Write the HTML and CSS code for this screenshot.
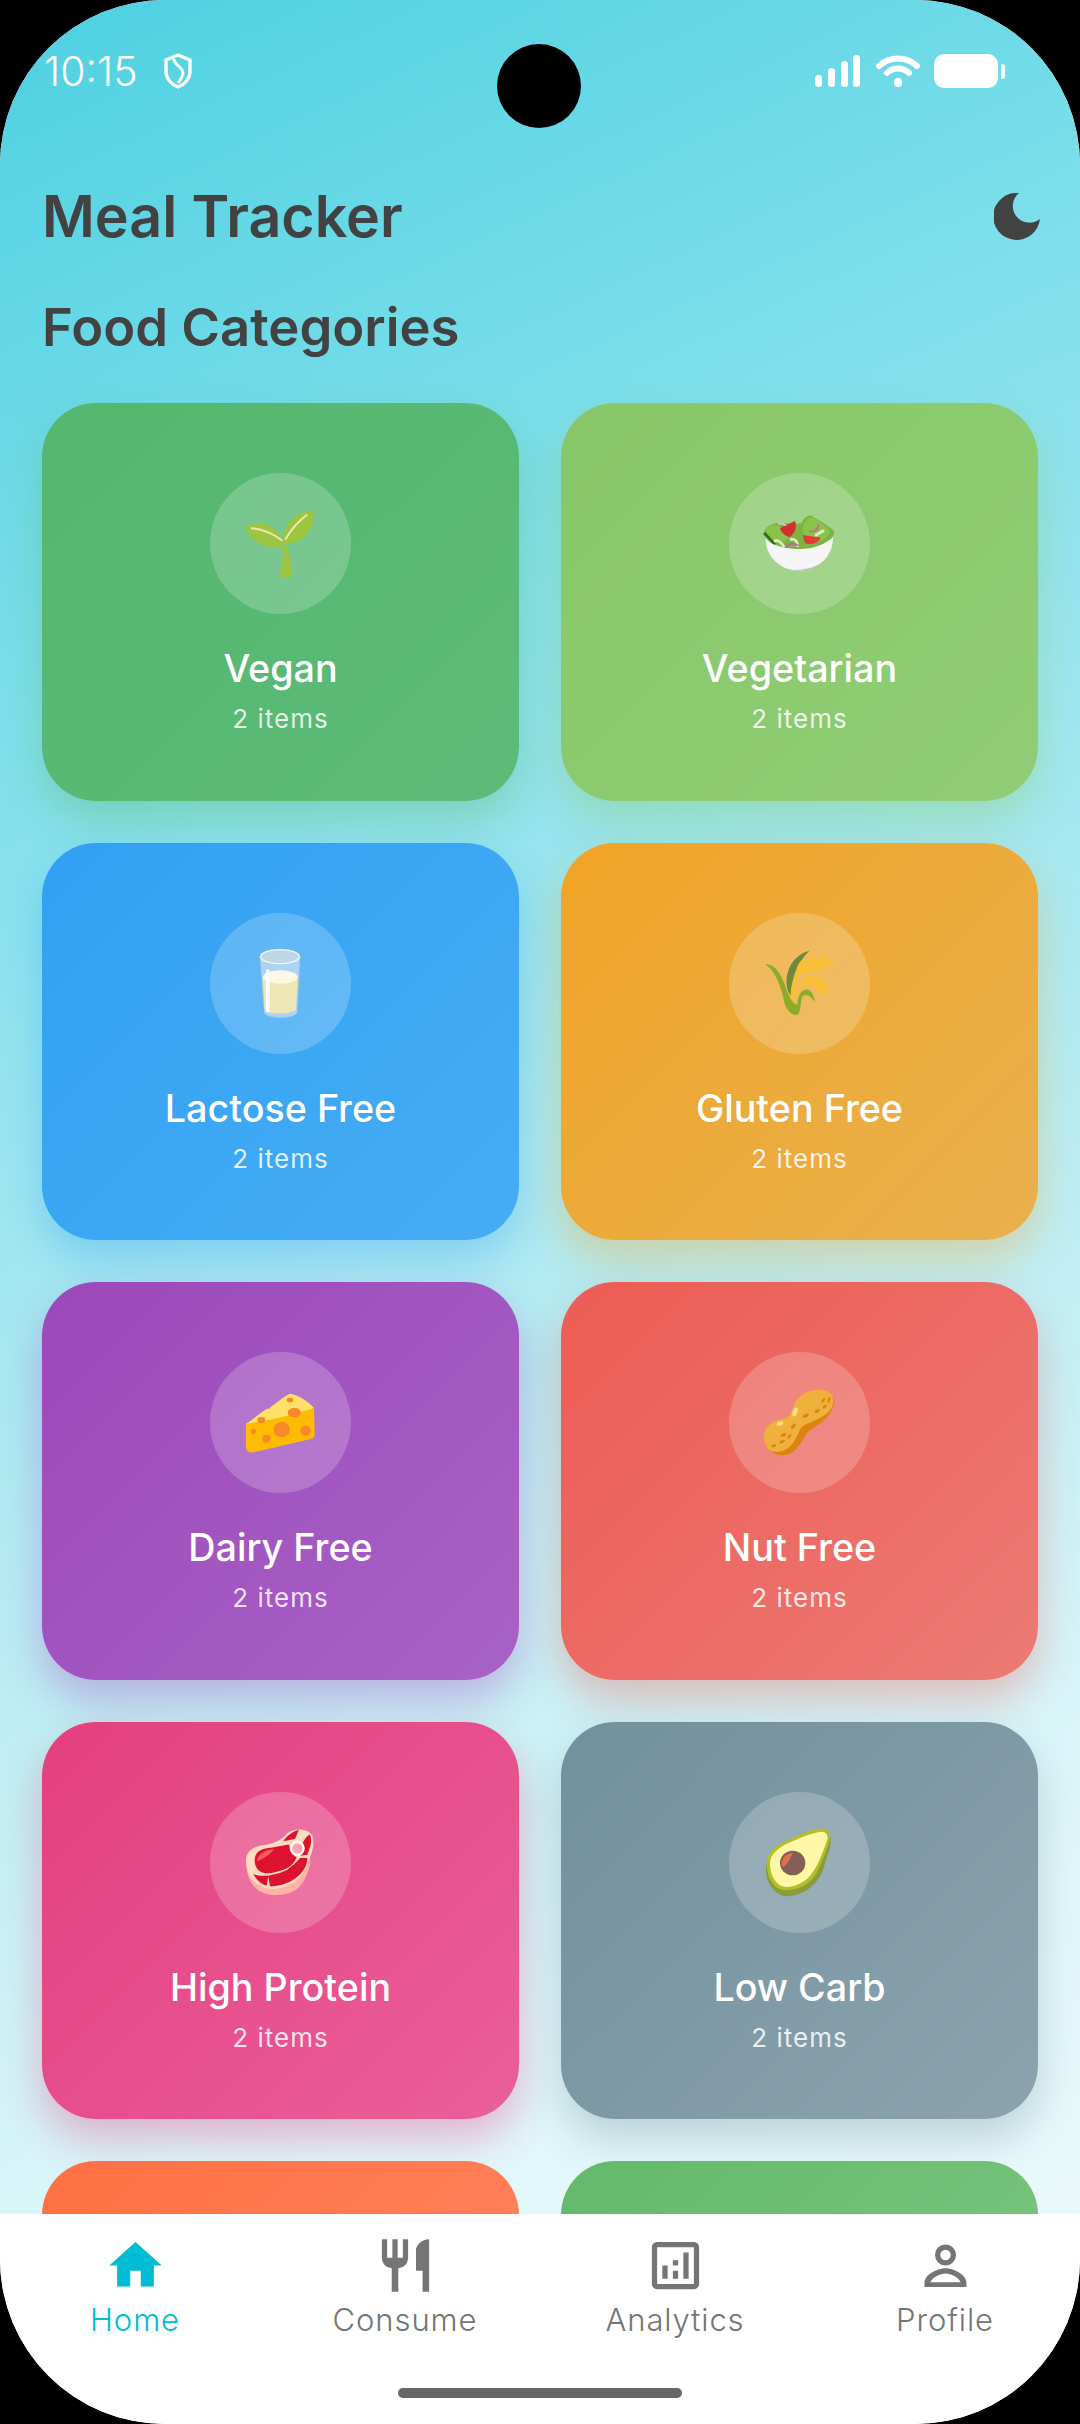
FILE: index.html
```html
<!DOCTYPE html>
<html lang="en">
<head>
<meta charset="utf-8">
<title>Meal Tracker</title>
<link rel="stylesheet" href="styles.css">
</head>
<body>
<div class="screen">
  <div class="camera"></div>
  <main class="content">
    <div class="status">
      <div class="status-left">
        <span class="time">10:15</span>
        <svg class="shield" viewBox="0 0 30 36"><path d="M15 2 L27 7 V18 C27 26 21 32 15 34 C9 32 3 26 3 18 V7 Z" fill="none" stroke="#fff" stroke-width="3.4" stroke-linejoin="round"/><path d="M11 6 C11 12 20 14 20 20 C20 24 17 27 15 30" fill="none" stroke="#fff" stroke-width="3"/></svg>
      </div>
      <div class="status-right">
        <svg class="signal" viewBox="0 0 45 32"><rect x="0" y="20" width="7" height="12" rx="3.5"/><rect x="13" y="13" width="7" height="19" rx="3.5"/><rect x="26" y="6" width="7" height="26" rx="3.5"/><rect x="38" y="0" width="7" height="32" rx="3.5"/></svg>
        <svg class="wifi" viewBox="0 0 44 32"><path d="M3 11 C14 1 30 1 41 11" fill="none" stroke="#fff" stroke-width="6" stroke-linecap="round"/><path d="M11 18 C17 12 27 12 33 18" fill="none" stroke="#fff" stroke-width="6" stroke-linecap="round"/><rect x="18" y="23" width="8" height="9" rx="4" fill="#fff"/></svg>
        <div class="battery"></div>
        <div class="battery-nub"></div>
      </div>
    </div>
    <header class="title-row">
      <h1>Meal Tracker</h1>
      <svg class="moon" viewBox="0 0 46 47"><path d="M25 0 A23.5 23.5 0 1 0 46 26 A16 16 0 1 1 25 0 Z" fill="#424242"/></svg>
    </header>
    <h2>Food Categories</h2>
    <div class="grid">

      <article class="card vegan">
        <div class="circle"><svg viewBox="30 40 423 423"><path d="M250 355 C238 352 236 350 240 340 C248 315 250 285 247 258 L262 255 C268 285 276 320 274 345 C272 353 262 356 250 355 Z" fill="#9cc63f"/><path d="M136 205 C170 175 235 195 250 250 C252 260 240 262 225 263 C185 264 155 240 136 205 Z" fill="#9cc63f"/><path d="M342 153 C345 200 320 245 265 252 C252 254 246 248 248 235 C256 185 290 155 342 153 Z" fill="#9cc63f"/><path d="M156 206 C185 208 222 222 245 242" fill="none" stroke="#f5e6b0" stroke-width="6" stroke-linecap="round"/><path d="M257 238 C272 212 295 185 320 166" fill="none" stroke="#f5e6b0" stroke-width="6" stroke-linecap="round"/></svg></div>
        <h3>Vegan</h3><p>2 items</p>
      </article>

      <article class="card vegetarian">
        <div class="circle"><svg viewBox="27 40 423 423"><path d="M132 218 C140 200 150 192 175 190 L230 192 L245 190 C250 178 262 165 275 168 C290 180 325 195 343 215 C340 250 300 270 240 270 C190 270 150 255 132 218 Z" fill="#7cb342"/><path d="M136 212 C150 190 180 195 205 215 C215 245 180 255 160 240 Z" fill="#8bc34a"/><path d="M258 185 C270 160 290 180 322 205 C345 222 305 255 270 245 C245 230 240 200 258 185 Z" fill="#8bc34a"/><path d="M180 205 L225 184 C232 205 222 225 208 232 C195 228 182 218 180 205 Z" fill="#d32f2f"/><path d="M248 226 L302 234 C295 250 270 258 255 250 Z" fill="#e53935"/><path d="M132 220 L165 255" stroke="#33691e" stroke-width="8"/><path d="M162 245 C172 238 188 250 192 262" fill="none" stroke="#dcedc8" stroke-width="8"/><path d="M210 240 C222 235 235 245 232 262" fill="none" stroke="#dcedc8" stroke-width="8"/><path d="M285 228 L312 212" stroke="#dcedc8" stroke-width="9"/><path d="M198 264 C208 250 222 248 235 258" fill="none" stroke="#c2669b" stroke-width="5"/><path d="M268 213 C280 220 295 210 296 195" fill="none" stroke="#c2669b" stroke-width="5"/><path d="M174 194 C182 190 190 192 198 198" fill="none" stroke="#e8bcd6" stroke-width="5"/><path d="M137 238 C160 262 205 268 240 268 C280 268 315 255 339 232 C340 290 295 333 238 333 C180 333 137 290 137 238 Z" fill="#f5f5f5"/><path d="M152 284 C160 300 170 310 190 318 C175 315 160 305 152 284 Z" fill="#cfd8dc"/><path d="M165 322 C200 336 280 336 315 300 C295 325 265 333 238 333 C210 333 185 330 165 322 Z" fill="#bdbdbd"/></svg></div>
        <h3>Vegetarian</h3><p>2 items</p>
      </article>

      <article class="card lactose">
        <div class="circle"><svg viewBox="30 40 423 423"><path d="M180 170 C185 145 295 145 300 170 L291 340 C280 358 205 358 193 340 Z" fill="#c5dcef" fill-opacity=".75" stroke="#c9c4b4" stroke-opacity=".6" stroke-width="2"/><ellipse cx="240" cy="171" rx="58" ry="21" fill="#bfd5e8" stroke="#f5f5f0" stroke-width="4"/><path d="M188 232 C205 208 275 208 293 232 L288 330 C270 345 210 345 194 330 Z" fill="#eee6b4"/><ellipse cx="241" cy="232" rx="52" ry="20" fill="#fcf9e2"/><rect x="198" y="208" width="11" height="130" rx="5" fill="#fff" fill-opacity=".9"/></svg></div>
        <h3>Lactose Free</h3><p>2 items</p>
      </article>

      <article class="card gluten">
        <div class="circle"><svg viewBox="27 40 423 423"><path d="M268 153 C230 162 205 195 200 235 C198 260 203 280 215 290 C212 250 225 195 268 153 Z" fill="#6d8b3a"/><path d="M235 200 C222 230 210 260 212 300 L222 310 C222 275 228 240 240 215 Z" fill="#fbc02d"/><path d="M225 285 C235 260 250 250 262 245 L265 252 C250 258 238 270 230 292 Z" fill="#fbc02d"/><g fill="#fbc02d"><ellipse cx="245" cy="195" rx="9" ry="20" transform="rotate(35 245 195)"/><ellipse cx="272" cy="188" rx="8" ry="20" transform="rotate(35 272 188)"/><ellipse cx="300" cy="183" rx="8" ry="20" transform="rotate(55 300 183)"/><ellipse cx="325" cy="186" rx="7" ry="17" transform="rotate(80 325 186)"/><ellipse cx="250" cy="215" rx="18" ry="8" transform="rotate(-8 250 215)"/><ellipse cx="280" cy="206" rx="18" ry="8" transform="rotate(-15 280 206)"/><ellipse cx="308" cy="201" rx="16" ry="7" transform="rotate(-25 308 201)"/><ellipse cx="262" cy="245" rx="8" ry="20" transform="rotate(30 262 245)"/><ellipse cx="285" cy="240" rx="20" ry="8"/><ellipse cx="303" cy="252" rx="19" ry="7" transform="rotate(10 303 252)"/><ellipse cx="290" cy="262" rx="7" ry="17" transform="rotate(-30 290 262)"/><ellipse cx="313" cy="270" rx="7" ry="17" transform="rotate(-25 313 270)"/></g><path d="M135 194 C165 190 185 225 200 270 C208 295 220 312 232 315 C232 285 248 265 265 270 C276 274 282 290 285 308 C272 288 258 280 248 290 C240 302 244 330 235 343 C225 352 205 340 195 315 C185 270 170 215 135 194 Z" fill="#8bab2b"/></svg></div>
        <h3>Gluten Free</h3><p>2 items</p>
      </article>

      <article class="card dairy">
        <div class="circle"><svg viewBox="30 37 423 423"><path d="M138 252 C170 232 185 215 205 206 L207 210 L212 202 C235 185 255 168 270 162 C295 165 325 185 342 205 L342 222 L138 262 Z" fill="#ffe066"/><path d="M138 252 C200 245 280 225 342 205 L344 285 C344 292 340 296 332 298 L160 338 C148 340 139 335 138 325 Z" fill="#ffbb00"/><g fill="#f7892a"><ellipse cx="245" cy="270" rx="24" ry="23"/><ellipse cx="317" cy="273" rx="16" ry="15"/><ellipse cx="283" cy="219" rx="20" ry="14"/><ellipse cx="184" cy="241" rx="12" ry="9"/><ellipse cx="199" cy="297" rx="12" ry="12"/><ellipse cx="160" cy="275" rx="8" ry="8"/><ellipse cx="270" cy="181" rx="10" ry="7"/></g></svg></div>
        <h3>Dairy Free</h3><p>2 items</p>
      </article>

      <article class="card nut">
        <div class="circle"><svg viewBox="27 37 423 423"><path d="M135 300 C135 320 155 347 190 347 C225 345 240 315 262 278 C280 262 335 240 342 190 L340 175 L150 285 Z" fill="#dc8410"/><path d="M132 290 C132 260 160 240 190 238 C210 235 215 215 225 190 C240 160 280 145 315 152 C340 160 345 185 335 205 C320 230 280 245 255 255 C235 265 235 290 215 315 C195 340 150 345 140 320 C134 310 132 300 132 290 Z" fill="#f0b13c"/><g fill="#dc8410"><ellipse cx="310" cy="182" rx="8" ry="4" transform="rotate(-55 310 182)"/><ellipse cx="327" cy="181" rx="9" ry="4" transform="rotate(-70 327 181)"/><ellipse cx="314" cy="201" rx="8" ry="4" transform="rotate(-40 314 201)"/><ellipse cx="292" cy="214" rx="9" ry="5" transform="rotate(-25 292 214)"/><ellipse cx="257" cy="228" rx="10" ry="5" transform="rotate(-25 257 228)"/><ellipse cx="220" cy="260" rx="9" ry="5" transform="rotate(-50 220 260)"/><ellipse cx="190" cy="286" rx="9" ry="5" transform="rotate(-20 190 286)"/><ellipse cx="208" cy="290" rx="8" ry="4" transform="rotate(-50 208 290)"/><ellipse cx="186" cy="306" rx="9" ry="4" transform="rotate(-25 186 306)"/><ellipse cx="161" cy="318" rx="8" ry="4" transform="rotate(-15 161 318)"/></g><g fill="#f9d98a"><ellipse cx="225" cy="217" rx="7" ry="14" transform="rotate(20 225 217)"/><ellipse cx="180" cy="252" rx="10" ry="6" transform="rotate(-20 180 252)"/></g></svg></div>
        <h3>Nut Free</h3><p>2 items</p>
      </article>

      <article class="card protein">
        <div class="circle"><svg viewBox="30 37 423 423"><path d="M140 265 C142 300 165 345 225 346 C280 345 305 325 320 285 C328 265 335 245 328 225 L140 250 Z" fill="#ffb3a7"/><path d="M138 240 C140 210 165 198 200 195 C225 190 250 178 262 160 C285 145 325 145 338 170 C345 195 335 225 325 245 C310 290 285 320 225 328 C170 330 137 290 138 240 Z" fill="#ffdcc0"/><path d="M165 252 C160 225 175 208 205 205 C225 203 250 195 268 195 C268 215 282 230 290 232 C280 262 255 270 225 278 C195 285 170 278 165 252 Z" fill="#dd1230"/><path d="M160 283 C190 295 230 285 262 270 C275 258 290 250 300 235 L322 235 C322 270 290 310 222 320 L210 320 L205 290 L200 318 C180 312 168 298 160 283 Z" fill="#dd1230"/><path d="M250 185 C262 165 280 155 297 150 L285 178 C272 180 260 183 250 185 Z" fill="#dd1230"/><path d="M308 190 C315 175 325 165 330 165 C338 185 330 205 322 225 L300 228 C312 215 312 200 308 190 Z" fill="#dd1230"/><path d="M170 245 C175 225 190 212 222 208 C210 225 195 235 170 245 Z" fill="#f45c5c"/><circle cx="292" cy="206" r="19" fill="#ffa3ad" stroke="#fff" stroke-width="7"/></svg></div>
        <h3>High Protein</h3><p>2 items</p>
      </article>

      <article class="card lowcarb">
        <div class="circle"><svg viewBox="27 37 423 423"><path d="M138 268 C138 240 158 210 195 190 C235 170 270 158 300 150 L330 165 C340 195 322 220 315 250 C305 300 265 345 205 350 C165 352 135 305 138 268 Z" fill="#8a9b3c"/><path d="M140 250 C140 215 170 195 205 180 C240 165 270 150 305 146 C325 146 335 165 328 185 C318 215 310 240 290 280 C270 315 235 332 195 332 C160 330 140 290 140 250 Z" fill="#b0bf2a"/><path d="M150 252 C150 220 180 202 210 188 C245 172 275 160 305 156 C318 155 327 168 321 183 C310 210 300 245 280 275 C262 305 230 322 198 322 C168 320 150 285 150 252 Z" fill="#fff7a6"/><ellipse cx="218" cy="250" rx="38" ry="37" fill="#855e55"/><path d="M184 255 C184 235 200 220 218 220 C212 235 205 250 190 262 Z" fill="#e27050"/></svg></div>
        <h3>Low Carb</h3><p>2 items</p>
      </article>

      <article class="card orange"></article>
      <article class="card green"></article>
    </div>
  </main>
  <nav class="nav">
    <a class="tab active">
      <svg class="tab-icon" viewBox="0 0 24 24"><path d="M10 20v-6h4v6h5v-8h3L12 3 2 12h3v8z" fill="currentColor"/></svg>
      <span>Home</span>
    </a>
    <a class="tab">
      <svg class="tab-icon" viewBox="0 0 24 24"><path d="M11 9H9V2H7v7H5V2H3v7c0 2.12 1.66 3.84 3.75 3.97V22h2.5v-9.03C11.34 12.84 13 11.12 13 9V2h-2v7zm5-3v8h2.5v8H21V2c-2.76 0-5 2.24-5 4z" fill="currentColor"/></svg>
      <span>Consume</span>
    </a>
    <a class="tab">
      <svg class="tab-icon" viewBox="0 0 24 24"><path d="M19 3H5c-1.1 0-2 .9-2 2v14c0 1.1.9 2 2 2h14c1.1 0 2-.9 2-2V5c0-1.1-.9-2-2-2zm0 16H5V5h14v14zM7 12h2v5H7zm8-5h2v10h-2zm-4 7h2v3h-2zm0-4h2v2h-2z" fill="currentColor"/></svg>
      <span>Analytics</span>
    </a>
    <a class="tab">
      <svg class="tab-icon" viewBox="0 0 24 24"><path fill-rule="evenodd" d="M12 4a4 4 0 1 1 0 8 4 4 0 0 1 0-8zm0 2a2 2 0 1 0 0 4 2 2 0 0 0 0-4zM4 20.2V18.6C4 15.4 9 13 12 13s8 2.4 8 5.6v1.6zM6.2 18.4h11.6C17 16.4 14 15 12 15s-5 1.4-5.8 3.4z" fill="currentColor"/></svg>
      <span>Profile</span>
    </a>
    <div class="home-bar"></div>
  </nav>
</div>
</body>
</html>
```
FILE: styles.css
```css
* { box-sizing: border-box; }
html, body { margin: 0; padding: 0; background: #000; }
body { width: 1080px; height: 2424px; overflow: hidden; font-family: Inter, "Liberation Sans", sans-serif; }

.screen {
  position: relative;
  width: 1080px;
  height: 2424px;
  border-radius: 165px;
  overflow: hidden;
  display: flex;
  flex-direction: column;
  background: #fff;
}
.camera {
  position: absolute;
  left: 497px;
  top: 44px;
  width: 84px;
  height: 84px;
  border-radius: 50%;
  background: #000;
  z-index: 3;
}
.content {
  height: 2214px;
  overflow: hidden;
  padding: 0 42px;
  background: linear-gradient(155deg, #4dd0e1 0%, #7fdfeb 25%, #b8ecf3 55%, #e0f7fa 80%, #eefafb 100%);
  background-size: 100% 2424px;
}
.status {
  height: 62px;
  margin-top: 40px;
  display: flex;
  align-items: center;
  justify-content: space-between;
  color: #fff;
}
.status-left { display: flex; align-items: center; gap: 25px; padding-left: 2px; }
.time { font-size: 41px; font-weight: 300; line-height: 42px; }
.shield { width: 30px; height: 36px; }
.status-right { display: flex; align-items: center; height: 34px; margin-right: 33px; }
.signal { width: 45px; height: 32px; fill: #fff; }
.wifi { width: 44px; height: 32px; margin-left: 16px; }
.battery { width: 64px; height: 34px; margin-left: 14px; background: #fff; border-radius: 10px; }
.battery-nub { width: 4px; height: 15px; margin-left: 3px; background: #fff; border-radius: 0 3px 3px 0; }

.title-row {
  display: flex;
  align-items: center;
  justify-content: space-between;
  margin-top: 76px;
  height: 76px;
}
h1 { margin: 0; font-size: 57.3px; font-weight: 600; line-height: 76px; color: #424242; }
.moon { width: 46px; height: 47px; margin-right: -2px; }
h2 { margin: 43px 0 0; font-size: 52.6px; font-weight: 600; line-height: 60px; color: #424242; }

.grid {
  display: grid;
  grid-template-columns: 477px 477px;
  grid-auto-rows: 397.5px;
  gap: 42px;
  margin-top: 46px;
}
.card {
  border-radius: 54px;
  display: flex;
  flex-direction: column;
  align-items: center;
  padding-top: 70px;
  color: #fff;
}
.circle {
  width: 141px;
  height: 141px;
  border-radius: 50%;
  background: rgba(255, 255, 255, .2);
  flex: none;
}
.circle svg { display: block; width: 141px; height: 141px; }
h3 { margin: 30px 0 0; font-size: 37.7px; font-weight: 500; line-height: 48px; }
.card p { margin: 11px 0 0; font-size: 26px; font-weight: 400; line-height: 32px; letter-spacing: 1px; color: rgba(255, 255, 255, .85); }

.vegan { background: linear-gradient(135deg, #54b76f, #5cbb78); box-shadow: 0 20px 40px rgba(76, 175, 80, .3); }
.vegetarian { background: linear-gradient(135deg, #88c768, #90cd76); box-shadow: 0 20px 40px rgba(139, 195, 74, .3); }
.lactose { background: linear-gradient(135deg, #32a0f3, #45adf4); box-shadow: 0 20px 40px rgba(33, 150, 243, .3); }
.gluten { background: linear-gradient(135deg, #f0a426, #e9b04e); box-shadow: 0 20px 40px rgba(255, 152, 0, .3); }
.dairy { background: linear-gradient(135deg, #9c48bb, #a862c6); box-shadow: 0 20px 40px rgba(156, 39, 176, .3); }
.nut { background: linear-gradient(135deg, #ec5c54, #ec7a74); box-shadow: 0 20px 40px rgba(244, 67, 54, .3); }
.protein { background: linear-gradient(135deg, #e43f7f, #ea5f98); box-shadow: 0 20px 40px rgba(233, 30, 99, .3); }
.lowcarb { background: linear-gradient(135deg, #72909d, #8ba3af); box-shadow: 0 20px 40px rgba(96, 125, 139, .3); }
.orange { background: linear-gradient(135deg, #ff6f42, #ff8a66); }
.green { background: linear-gradient(135deg, #63b96b, #82c884); }

.nav {
  position: relative;
  flex: 1;
  display: grid;
  grid-template-columns: repeat(4, 270px);
  align-items: start;
  background: #fff;
  padding-top: 20px;
}
.tab { display: flex; flex-direction: column; align-items: center; color: #757575; }
.tab.active { color: #00bcd4; }
.tab-icon { width: 63px; height: 63px; display: block; }
.tab span { margin-top: 3px; font-size: 31px; font-weight: 350; line-height: 40px; letter-spacing: .9px; }
.home-bar {
  position: absolute;
  left: 398px;
  top: 174px;
  width: 284px;
  height: 10px;
  border-radius: 5px;
  background: #666;
}
```
